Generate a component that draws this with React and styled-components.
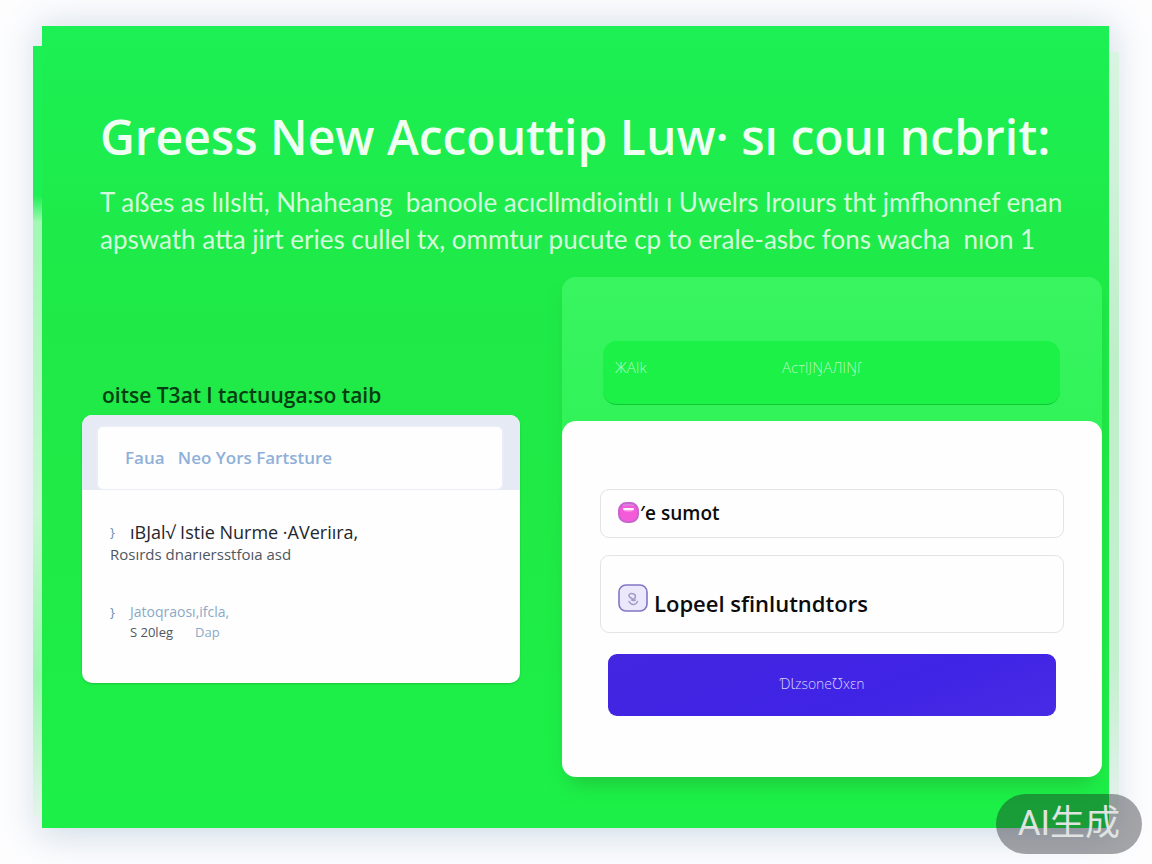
import React from "react";
import styled, { createGlobalStyle } from "styled-components";

const Global = createGlobalStyle`
  *, *::before, *::after { box-sizing: border-box; }
  body {
    margin: 0;
    background: #fdfdfe;
    font-family: "Open Sans", "Noto Sans", "Noto Sans CJK SC", sans-serif;
    color: #14171c;
  }
  h1, h2, h3, p, ul { margin: 0; padding: 0; }
  button, input { font-family: inherit; }
`;

const Page = styled.div`
  position: relative;
  min-height: 100vh;
  padding: 26px 43px 36px 42px;
`;

const Stage = styled.main`
  position: relative;
  padding: 86px 7px 51px 40px;
  background: linear-gradient(180deg, #1cf054 0%, #1eea48 30%, #20ea46 60%, #1cf048 100%);
  box-shadow: 0 4px 36px 4px #cfdbe6;
`;

const LeftEdge = styled.div`
  position: absolute;
  top: 20px;
  right: 100%;
  bottom: 12px;
  width: 9px;
  background: linear-gradient(180deg, #1cf054 0 150px, #a2f8b4 176px, #c8f8d2 60%, #9af8ae 82%, #e4f4ea 100%);
`;

const RightEdge = styled.div`
  position: absolute;
  top: 26px;
  left: 100%;
  bottom: 12px;
  width: 10px;
  background: linear-gradient(180deg, #d9f4e2, #bfeeca 40%, #c4f0cf 80%, #e6f0ee);
`;

const Header = styled.header`
  padding: 0 18px;
  color: #f0fff4;
`;

const Title = styled.h1`
  font-size: 48px;
  line-height: 50px;
  font-weight: 600;
  white-space: pre;
`;

const Lead = styled.p`
  margin-top: 22px;
  font-family: Lato, "Open Sans", sans-serif;
  font-size: 26px;
  line-height: 37px;
  color: #d3fbdc;
  white-space: pre;
`;

const Columns = styled.div`
  display: grid;
  grid-template-columns: 438fr 540fr;
  gap: 42px;
  margin-top: 19px;
`;

const Left = styled.section`
  padding-top: 103px;
`;

const SectionTitle = styled.h2`
  padding-left: 20px;
  font-size: 21px;
  line-height: 30px;
  font-weight: 600;
  color: #073d12;
  white-space: pre;
`;

const InfoCard = styled.div`
  margin-top: 5px;
  min-height: 268px;
  border-radius: 10px;
  background: #fefefe;
  overflow: hidden;
  box-shadow: 0 1px 2px #18c63e;
`;

const InfoHead = styled.div`
  padding: 12px 18px 1px 16px;
  background: #e6eaf4;
`;

const InfoName = styled.h3`
  padding: 0 27px;
  border-radius: 5px;
  background: #fefeff;
  font-size: 17px;
  line-height: 62px;
  font-weight: 600;
  color: #8fb0d8;
  white-space: pre;
  box-shadow: 0 0 3px #f4f6fb;
`;

const Items = styled.ul`
  display: grid;
  gap: 36px;
  padding: 30px 28px;
  list-style: none;
`;

const Item = styled.li`
  display: grid;
  grid-template-columns: 20px 1fr;
  line-height: 24px;
  font-size: ${(p) => (p.$soft ? 14 : 18)}px;
  color: ${(p) => (p.$soft ? "#8ba9c6" : "#23262c")};
`;

const Mark = styled.span`
  font-size: 13px;
  color: #6d8cad;
`;

const Detail = styled.p`
  grid-column: ${(p) => (p.$inset ? "2" : "1 / -1")};
  display: flex;
  gap: 22px;
  font-size: ${(p) => (p.$inset ? 13 : 15)}px;
  line-height: ${(p) => (p.$inset ? 16 : 20)}px;
  color: #50565f;
`;

const Soft = styled.span`
  color: #8ba9c6;
`;

const Right = styled.section`
  border-radius: 14px;
  background: linear-gradient(180deg, #38f560, #2ff257 40%);
  box-shadow: 0 14px 20px -8px #20c63c;
`;

const Banner = styled.div`
  padding: 64px 42px 16px 41px;
`;

const Toggle = styled.button`
  display: grid;
  grid-template-columns: 167px 1fr;
  width: 100%;
  height: 64px;
  padding: 0 12px 12px;
  align-items: center;
  border: 0;
  border-bottom: 1px solid #10c736;
  border-radius: 14px;
  background: #1bf146;
  font-size: 15px;
  font-weight: 300;
  text-align: left;
  color: #b4fac0;
`;

const Form = styled.form`
  display: grid;
  padding: 68px 38px 61px;
  border-radius: 14px;
  background: #fefefe;
`;

const Field = styled.label`
  display: flex;
  align-items: center;
  gap: ${(p) => (p.$tall ? 6 : 1)}px;
  height: ${(p) => (p.$tall ? 78 : 49)}px;
  margin-bottom: ${(p) => (p.$tall ? 21 : 17)}px;
  padding: ${(p) => (p.$tall ? "8px 17px 0" : "0 17px 2px")};
  border: 1px solid #e3e3e6;
  border-radius: 9px;

  svg { flex: none; }
`;

const TextInput = styled.input`
  flex: 1;
  min-width: 0;
  padding: ${(p) => (p.$tall ? "10px 0 0" : "0")};
  border: 0;
  outline: 0;
  background: none;
  font-size: ${(p) => (p.$tall ? 22 : 19)}px;
  font-weight: 600;
  color: #0c0c0e;
`;

const Submit = styled.button`
  height: 62px;
  margin: 0 8px;
  padding: 0 20px 4px 0;
  border: 0;
  border-radius: 9px;
  background: linear-gradient(160deg, #4326e0, #4024e6 60%, #472be4);
  font-size: 14px;
  font-weight: 300;
  color: #d6ceff;
`;

const Badge = styled.div`
  position: absolute;
  right: 10px;
  bottom: 10px;
  padding: 0 22px;
  border-radius: 30px;
  background: rgba(20, 20, 30, 0.38);
  font-family: Roboto, "Noto Sans CJK SC", sans-serif;
  font-size: 35px;
  line-height: 60px;
  color: #dfe3e2;
`;

function PinkIcon() {
  return (
    <svg width="21" height="24" viewBox="0 0 21 24" aria-hidden="true">
      <rect x="1" y="2" width="19" height="19" rx="7.500" fill="#f35bd8" stroke="#c765cf" strokeWidth="2" />
      <path d="M5 7.500h11l-1 2.500q-4 1-9 0z" fill="#ff9cec" />
      <path d="M6 8h9" fill="none" stroke="#fff4fd" strokeWidth="2" strokeLinecap="round" />
      <path d="M5 4.500q5-1.500 11 0" fill="none" stroke="#d987de" strokeWidth="1.500" />
    </svg>
  );
}

function PersonIcon() {
  return (
    <svg width="30" height="28" viewBox="0 0 30 28" aria-hidden="true">
      <rect x="1" y="1" width="28" height="26" rx="7" fill="#ebe8fb" stroke="#8076c4" strokeWidth="1.6" />
      <path d="M14 14.500q-3.500-1.500-3-3.500q1-2 3-1.500q3.500.5 3.500 3q0 2-3.500 3.500q2 1 3.500 0M11 17.500q2 3.500 5 3q2.500-.5 3.500-3" fill="none" stroke="#a29bc8" strokeWidth="1.500" strokeLinecap="round" />
    </svg>
  );
}

export default function App() {
  return (
    <>
      <Global />
      <Page>
        <Stage>
          <LeftEdge />
          <RightEdge />
          <Header>
            <Title>Greess New Accouttip Luw· sı couı ncbrit:</Title>
            <Lead>
              {"T aßes as lılslti, Nhaheang  banoole acıcllmdiointlı ı Uwelrs lroıurs tht jmfhonnef enan\n"}
              {"apswath atta jirt eries cullel tx, ommtur pucute cp to erale-asbc fons wacha  nıon 1"}
            </Lead>
          </Header>
          <Columns>
            <Left>
              <SectionTitle>oitse T3at l tactuuga:so taib</SectionTitle>
              <InfoCard>
                <InfoHead>
                  <InfoName>Faua   Neo Yors Fartsture</InfoName>
                </InfoHead>
                <Items>
                  <Item>
                    <Mark>}</Mark>
                    <span>ıBJal√ Istie Nurme ·AVeriıra,</span>
                    <Detail>Rosırds dnarıersstfoıa asd</Detail>
                  </Item>
                  <Item $soft>
                    <Mark>}</Mark>
                    <span>Jatoqraosı,ifcla,</span>
                    <Detail $inset>
                      <span>S 20leg</span>
                      <Soft>Dap</Soft>
                    </Detail>
                  </Item>
                </Items>
              </InfoCard>
            </Left>
            <Right>
              <Banner>
                <Toggle type="button">
                  <span>ЖAIk</span>
                  <span>AcтIJŊAЛIŊſ</span>
                </Toggle>
              </Banner>
              <Form onSubmit={(e) => e.preventDefault()}>
                <Field>
                  <PinkIcon />
                  <TextInput aria-label="e sumot" defaultValue="′e sumot" />
                </Field>
                <Field $tall>
                  <PersonIcon />
                  <TextInput $tall aria-label="Lopeel" defaultValue="Lopeel sfinlutndtors" />
                </Field>
                <Submit type="submit">ƊƖzsoneƱxɛn</Submit>
              </Form>
            </Right>
          </Columns>
        </Stage>
        <Badge>AI生成</Badge>
      </Page>
    </>
  );
}
